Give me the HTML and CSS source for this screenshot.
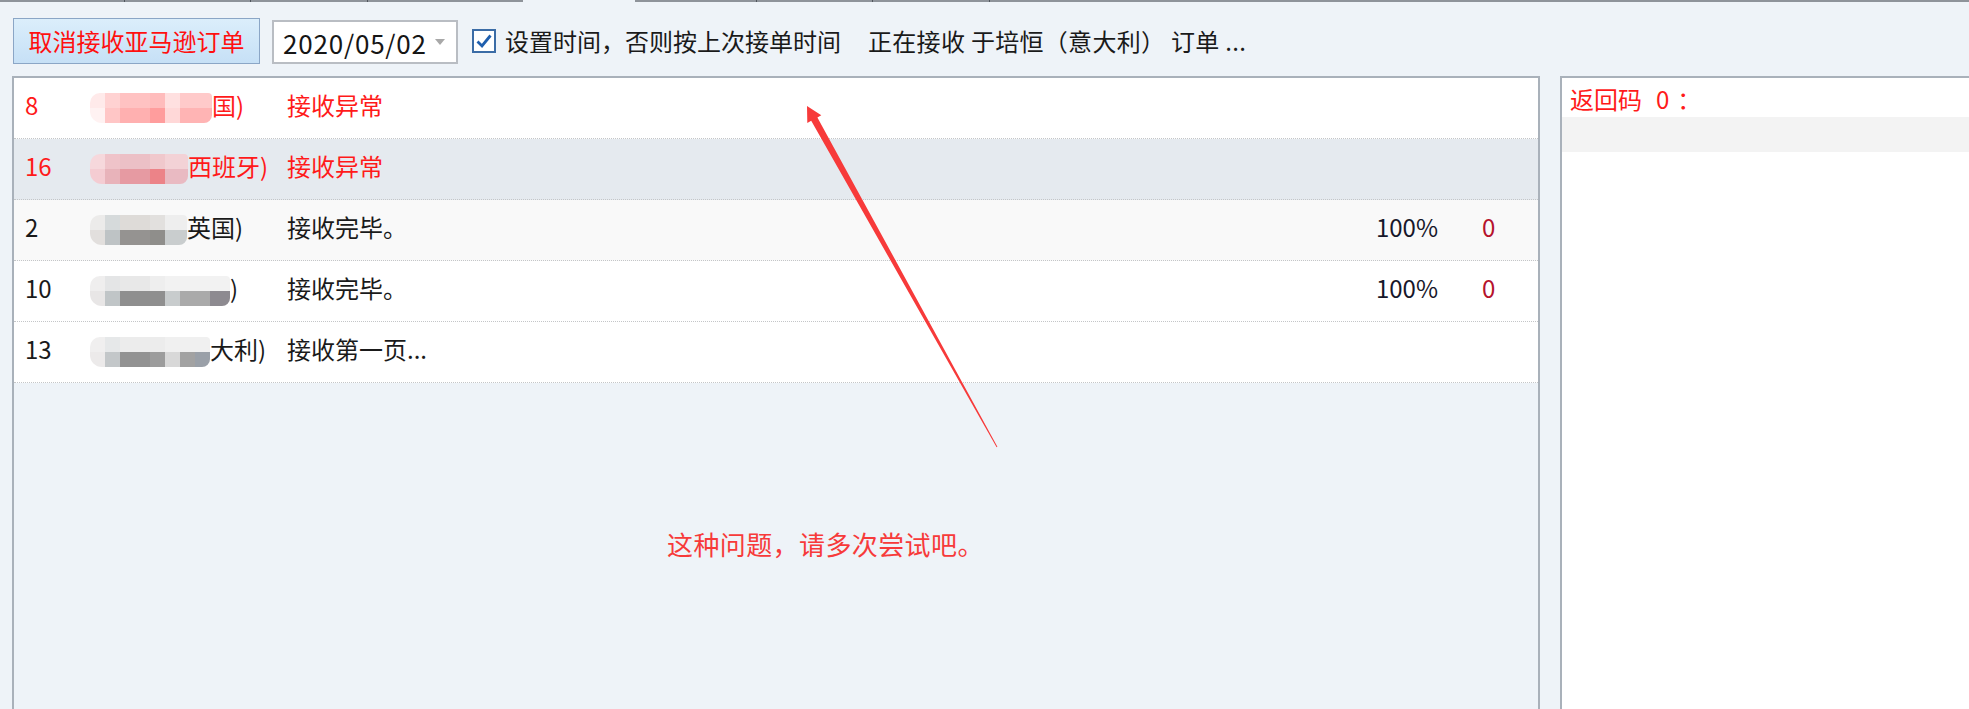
FILE: index.html
```html
<!DOCTYPE html>
<html lang="zh-CN">
  <head>
    <meta charset="UTF-8" />
    <meta name="viewport" content="width=device-width, initial-scale=1.0" />
    <title>接收亚马逊订单</title>
    <link rel="stylesheet" href="styles.css">
  </head>

  <body>
    <div class="window">
      <!-- Tab strip edge -->
      <div class="tabstrip">
        <div class="tabs">
          <span class="tab tab-1"></span>
          <span class="tab tab-2"></span>
          <span class="tab tab-3"></span>
          <span class="tab tab-4"></span>
        </div>
        <div class="tab-gap"></div>
        <div class="tabs tabs-rest">
          <span class="tab tab-5"></span>
          <span class="tab tab-6"></span>
          <span class="tab tab-7"></span>
          <span class="tab tab-last"></span>
        </div>
      </div>

      <!-- Toolbar -->
      <div class="toolbar">
        <button class="btn-cancel">取消接收亚马逊订单</button>
        <div class="date-box">
          <span class="date-text">2020/05/02</span>
          <span class="date-arrow"></span>
        </div>
        <label class="check">
          <span class="check-box">
            <svg width="20" height="20" viewBox="0 0 20 20">
              <path d="M3.5 10.5 L8 15 L16.5 4.5" fill="none" stroke="#1f5fae" stroke-width="2.8" />
            </svg>
          </span>
          <span class="check-label">设置时间，否则按上次接单时间</span>
        </label>
        <span class="status-text">正在接收 于培恒（意大利） 订单 ...</span>
      </div>

      <!-- Main area -->
      <div class="content">
        <div class="list-panel">
          <div class="row row-error">
            <span class="num">8</span>
            <span class="name"><span class="mosaic mosaic-pink"></span>国)</span>
            <span class="state">接收异常</span>
          </div>
          <div class="row row-error row-selected">
            <span class="num">16</span>
            <span class="name"><span class="mosaic mosaic-red"></span>西班牙)</span>
            <span class="state">接收异常</span>
          </div>
          <div class="row row-alt">
            <span class="num">2</span>
            <span class="name"><span class="mosaic mosaic-gray-a"></span>英国)</span>
            <span class="state">接收完毕。</span>
            <span class="pct">100%</span>
            <span class="err">0</span>
          </div>
          <div class="row">
            <span class="num">10</span>
            <span class="name"><span class="mosaic mosaic-gray-b"></span>)</span>
            <span class="state">接收完毕。</span>
            <span class="pct">100%</span>
            <span class="err">0</span>
          </div>
          <div class="row">
            <span class="num">13</span>
            <span class="name"><span class="mosaic mosaic-gray-c"></span>大利)</span>
            <span class="state">接收第一页...</span>
          </div>
        </div>

        <div class="result-panel">
          <div class="result-line">返回码<span class="code">0</span><span class="colon">：</span></div>
          <div class="result-line result-stripe"></div>
        </div>
      </div>

      <!-- Annotation drawn over the screenshot -->
      <svg class="annotation" width="1969" height="709" viewBox="0 0 1969 709">
        <polygon fill="#f73a3a"
          points="807,106 821.3,115.2 817.4,117.4 997.4,446.8 996.6,447.2 811.2,120.8 807.3,123" />
      </svg>
      <div class="note">这种问题，请多次尝试吧。</div>
    </div>
  </body>
</html>
```

FILE: styles.css
```css
body,
html {
  margin: 0;
  padding: 0;
  width: 100%;
  height: 100%;
  overflow: hidden;
  font-family: "Noto Sans CJK SC", "Noto Sans", sans-serif;
  font-size: 24px;
  color: #1a1a1a;
  background-color: #eef3f8;
}

.window {
  position: relative;
  width: 1969px;
  height: 709px;
  display: flex;
  flex-direction: column;
}

/* Tab strip edge */
.tabstrip {
  display: flex;
  height: 3px;
}

.tabs {
  display: flex;
}

.tabs-rest {
  flex: 1;
}

.tab {
  height: 2px;
  background-color: #8e939a;
  border-right: 1px solid #50555c;
}

.tab-1 { width: 124px; }
.tab-2 { width: 125px; }
.tab-3 { width: 116px; }
.tab-4 { width: 155px; border-right: none; }
.tab-5 { width: 121px; }
.tab-6 { width: 115px; }
.tab-7 { width: 116px; }
.tab-last { flex: 1; border-right: none; }

.tab-gap {
  width: 112px;
}

/* Toolbar */
.toolbar {
  height: 73px;
  box-sizing: border-box;
  padding: 15px 0 0 13px;
  display: flex;
  align-items: flex-start;
}

.btn-cancel {
  width: 247px;
  height: 46px;
  margin: 0;
  padding: 0;
  border: 1px solid #8ba6c6;
  background: linear-gradient(to bottom, #dbeefb 0%, #c6e0f6 100%);
  color: #ff1010;
  font-family: inherit;
  font-size: 24px;
  line-height: 44px;
}

.date-box {
  margin: 2px 0 0 12px;
  width: 186px;
  height: 44px;
  box-sizing: border-box;
  border: 2px solid #b9bdc3;
  background-color: #fff;
  display: flex;
  align-items: center;
  padding-left: 9px;
}

.date-text {
  font-size: 26px;
  letter-spacing: 0.8px;
  color: #151515;
}

.date-arrow {
  margin-left: 8px;
  width: 0;
  height: 0;
  border-left: 5px solid transparent;
  border-right: 5px solid transparent;
  border-top: 6px solid #a8a8a8;
}

.check {
  margin: 11px 0 0 14px;
  display: flex;
  align-items: center;
  height: 24px;
  line-height: 24px;
}

.check-box {
  width: 24px;
  height: 24px;
  box-sizing: border-box;
  border: 2px solid #3b6ca6;
  background-color: #fff;
  display: flex;
  align-items: center;
  justify-content: center;
  margin-right: 9px;
}

.status-text {
  margin: 11px 0 0 27px;
  line-height: 24px;
  letter-spacing: 0.3px;
}

/* Main area */
.content {
  flex: 1;
  display: flex;
  padding-left: 12px;
  gap: 20px;
}

.list-panel {
  width: 1528px;
  box-sizing: border-box;
  border: 2px solid #a9b1ba;
  border-bottom: none;
  background-color: #eef3f8;
}

.row {
  height: 61px;
  box-sizing: border-box;
  border-bottom: 1px dotted #c4c6c8;
  background-color: #fff;
  display: flex;
  align-items: center;
  padding: 0 0 7px 11px;
}

.row-alt {
  background-color: #f9f9f9;
}

.row-selected {
  background-color: #e5eaef;
}

.row-error {
  color: #ff1a1a;
}

.num {
  width: 65px;
}

.name {
  width: 197px;
  display: flex;
  align-items: center;
}

.state {
  flex: 1;
}

.pct {
  width: 100px;
  text-align: right;
  margin-right: 44px;
  color: #17172a;
}

.err {
  width: 56px;
  color: #b5122c;
}

/* Pixelated customer names */
.mosaic {
  height: 30px;
  margin-top: 6px;
  border-radius: 10px 4px 8px 12px;
  background-repeat: no-repeat;
  background-size: 100% 15px;
  background-position: 0 0, 0 15px;
  filter: blur(0.6px);
}

.mosaic-pink {
  width: 122px;
  background-image:
    linear-gradient(to right, #ffeaea 0 15px, #ffd2d2 15px 30px, #ffc2c2 30px 60px, #ffbcbc 60px 75px, #ffe0e0 75px 90px, #ffcaca 90px 122px),
    linear-gradient(to right, #fff2f2 0 15px, #ffc6c6 15px 30px, #ffb0b0 30px 60px, #ff9d9d 60px 75px, #ffd8d8 75px 90px, #ffb4b4 90px 122px);
}

.mosaic-red {
  width: 98px;
  background-image:
    linear-gradient(to right, #f6d8dc 0 15px, #efc3c9 15px 30px, #ecc0c6 30px 60px, #f0c8cc 60px 75px, #f3d2d6 75px 98px),
    linear-gradient(to right, #f4ccd2 0 15px, #e8b3ba 15px 30px, #e69aa2 30px 60px, #ec8388 60px 75px, #e9bac2 75px 98px);
}

.mosaic-gray-a {
  width: 97px;
  background-image:
    linear-gradient(to right, #ecebea 0 15px, #d6dadb 15px 30px, #dedbd8 30px 60px, #e2e0de 60px 75px, #eeeeee 75px 97px),
    linear-gradient(to right, #e2dfdd 0 15px, #bec3c5 15px 30px, #959391 30px 60px, #8f8e8b 60px 75px, #c9cdce 75px 97px);
}

.mosaic-gray-b {
  width: 140px;
  background-image:
    linear-gradient(to right, #efeeee 0 15px, #e4e5e6 15px 30px, #e8e8e8 30px 60px, #eeeeee 60px 75px, #f2f2f2 75px 140px),
    linear-gradient(to right, #e8e6e6 0 15px, #c0c5c7 15px 30px, #8f8f8f 30px 75px, #c8cccd 75px 90px, #aaaaaa 90px 120px, #8d8a90 120px 140px);
}

.mosaic-gray-c {
  width: 120px;
  background-image:
    linear-gradient(to right, #f0efef 0 15px, #e6e8e9 15px 30px, #ececec 30px 75px, #f0f0f0 75px 120px),
    linear-gradient(to right, #eceaea 0 15px, #c3c7c9 15px 30px, #929292 30px 60px, #9c9c9c 60px 75px, #d8d8d8 75px 90px, #a2a2a2 90px 105px, #9aa0a8 105px 120px);
}

/* Result panel */
.result-panel {
  flex: 1;
  border-top: 2px solid #a9b1ba;
  border-left: 2px solid #a9b1ba;
  background-color: #fff;
}

.result-line {
  height: 39px;
  line-height: 42px;
  padding-left: 8px;
  color: #ff1a1a;
}

.result-stripe {
  height: 35px;
  background-color: #f3f3f3;
}

.code {
  margin-left: 14px;
}

.colon {
  margin-left: 8px;
}

/* Annotation overlay */
.annotation {
  position: absolute;
  left: 0;
  top: 0;
  pointer-events: none;
}

.note {
  position: absolute;
  left: 667px;
  top: 526px;
  font-size: 26px;
  line-height: 36px;
  letter-spacing: 0.4px;
  color: #f73a3a;
}
```
